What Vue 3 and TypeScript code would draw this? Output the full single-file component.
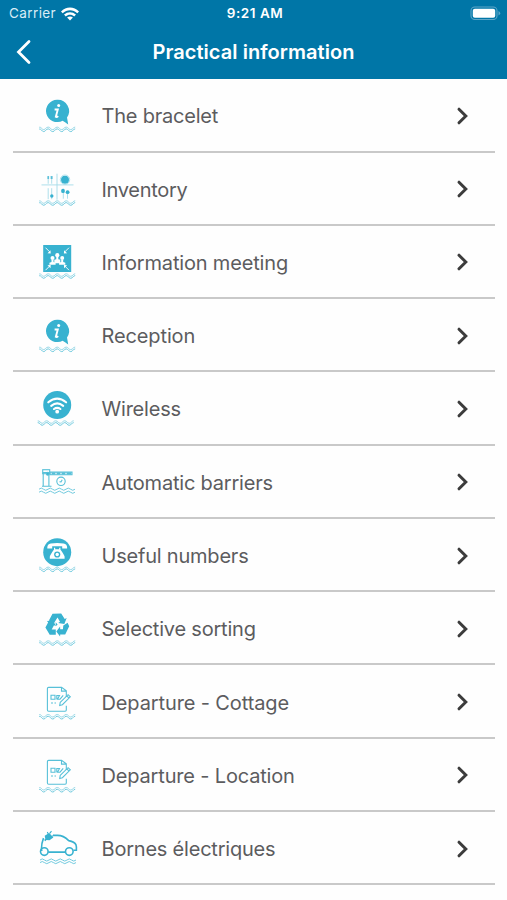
<script setup lang="ts">
type IconName =
  | 'info' | 'inventory' | 'meeting' | 'wifi' | 'barrier'
  | 'phone' | 'recycle' | 'document' | 'car'

interface Entry {
  label: string
  icon: IconName
  tracking: 'loose' | 'normal' | 'snug' | 'tight'
}

const entries: Entry[] = [
  { label: 'The bracelet', icon: 'info', tracking: 'snug' },
  { label: 'Inventory', icon: 'inventory', tracking: 'tight' },
  { label: 'Information meeting', icon: 'meeting', tracking: 'normal' },
  { label: 'Reception', icon: 'info', tracking: 'loose' },
  { label: 'Wireless', icon: 'wifi', tracking: 'snug' },
  { label: 'Automatic barriers', icon: 'barrier', tracking: 'snug' },
  { label: 'Useful numbers', icon: 'phone', tracking: 'snug' },
  { label: 'Selective sorting', icon: 'recycle', tracking: 'snug' },
  { label: 'Departure - Cottage', icon: 'document', tracking: 'loose' },
  { label: 'Departure - Location', icon: 'document', tracking: 'normal' },
  { label: 'Bornes électriques', icon: 'car', tracking: 'snug' },
]
</script>

<template>
  <div class="screen">
    <header class="header">
      <div class="status">
        <div class="carrier">
          <span>Carrier</span>
          <svg class="signal" viewBox="0 0 18 14" width="18" height="14">
            <path d="M0 4.500C5-.9 13-.9 18 4.500L16.300 6.300C12.200 2.200 5.800 2.200 1.700 6.300Z" />
            <path d="M3 7.600C6.300 4.300 11.700 4.300 15 7.600L13.200 9.400C10.800 7.200 7.200 7.200 4.800 9.400Z" />
            <path d="M6.100 10.600C7.800 9.200 10.200 9.200 11.900 10.600L9 13.500Z" />
          </svg>
        </div>
        <div class="time">9:21 AM</div>
        <svg class="battery" viewBox="0 0 31 15" width="31" height="15">
          <rect x="1" y="1" width="26" height="12.500" rx="3.800" fill="none" stroke="#5ea6c8" stroke-width="1.100" />
          <rect x="2.800" y="2.800" width="22.400" height="8.900" rx="2" fill="#fff" />
          <path d="M28.500 5v4.500q1.700-.7 1.700-2.250T28.500 5" fill="#5ea6c8" />
        </svg>
      </div>
      <div class="bar">
        <svg class="back" viewBox="0 0 18 26" width="18" height="26">
          <path d="M14 2.500 3.500 13 14 23.500" />
        </svg>
        <h1>Practical information</h1>
      </div>
    </header>
    <ul class="list">
      <li v-for="entry in entries" :key="entry.label" class="row">
        <svg class="icon" :class="entry.icon" viewBox="0 0 60 50" width="60" height="50">
          <g v-if="entry.icon === 'barrier'" class="swell">
            <path d="M9 33.200q2.250-2.200 4.500 0t4.500 0 4.500 0 4.500 0 4.500 0 4.500 0 4.500 0 4.500 0" />
            <path d="M9 36.200q2.250-2.200 4.500 0t4.500 0 4.500 0 4.500 0 4.500 0 4.500 0 4.500 0 4.500 0" />
          </g>
          <g v-else-if="entry.icon === 'car'" class="swell">
            <path d="M10 37q2.250-2.200 4.500 0t4.500 0 4.500 0 4.500 0 4.500 0 4.500 0 4.500 0 4.500 0" />
            <path d="M10 39.600q2.250-2.200 4.500 0t4.500 0 4.500 0 4.500 0 4.500 0 4.500 0 4.500 0 4.500 0" />
          </g>
          <g v-else class="waves" :class="{ left: entry.icon === 'wifi' }">
            <path d="M9.200 37.200c2.200-.4 2.600 2.400 4.500 2.400s2.200-2.500 4.500-2.500 2.200 2.500 4.500 2.500 2.200-2.500 4.500-2.500 2.200 2.500 4.500 2.500 2.200-2.500 4.500-2.500 2.200 2.500 4.500 2.500 2.200-2.500 4.500-2.500" class="second" />
            <path d="M9.200 39c2.200-.4 2.600 2.600 4.500 2.600s2.200-2.700 4.500-2.700 2.200 2.700 4.500 2.700 2.200-2.700 4.500-2.700 2.200 2.700 4.500 2.700 2.200-2.700 4.500-2.700 2.200 2.700 4.500 2.700 2.200-2.700 4.500-2.700" />
          </g>

          <g v-if="entry.icon === 'info'">
            <path class="fill" d="M27 9.700a11.200 11.200 0 1 0 5.600 21q2.100 1.100 5.600 3.700-.6-3.900-1.200-7A11.300 11.300 0 0 0 27 9.700" />
            <circle cx="28.700" cy="15.600" r="1.500" fill="#fff" />
            <path d="M24.600 19.500h3.200l-2 7.300q.9.700 2.400-.7" fill="none" stroke="#fff" stroke-width="1.900" />
          </g>

          <g v-else-if="entry.icon === 'inventory'">
            <path class="hair" d="M11.500 21.200h32M27 10v26M18.200 13v7M21.700 13v7M18.200 24.500v11M21.700 24.500v11M33.300 25v10M37.500 27v8" />
            <circle class="fill" cx="35" cy="16" r="4" />
            <circle cx="35" cy="16" r="4.700" fill="none" stroke="#9bd9e8" stroke-width=".8" />
            <path class="fill" d="M17.400 12.200h1.700v3h-1.700zm3.200 0h2v3h-2z" opacity=".75" />
            <ellipse class="fill" cx="33" cy="27.200" rx="1.900" ry="2.200" />
            <ellipse class="fill" cx="37.600" cy="28.500" rx="1.900" ry="1.900" />
            <circle class="fill" cx="21.800" cy="32.300" r="1.700" />
          </g>

          <g v-else-if="entry.icon === 'meeting'">
            <rect class="fill" x="13.200" y="8.300" width="28" height="27" />
            <g fill="#fff">
              <circle cx="27.300" cy="18.500" r="2.100" />
              <path d="M26.300 20h2v2.500l2 .6v3.400h-6v-3.400l2-.6z" />
              <circle cx="22.500" cy="21.300" r="2" />
              <path d="M21.500 23h2v2.200l2.100.8v2h-6.200v-2l2.100-.8z" />
              <circle cx="32.200" cy="21.300" r="2" />
              <path d="M31.200 23h2v2.200l2.100.8v2h-6.200v-2l2.100-.8z" />
              <path d="m20.700 16.700-.2-3.200-3 3zM33.900 16.700l.2-3.200 3 3zM20.700 28.300l-.2 3.200-3-3zM33.900 28.300l.2 3.200 3-3z" />
            </g>
            <path d="m15.500 11 4 4M39 11l-4 4M15.500 33.500l4-4M39 33.500l-4-4" stroke="#fff" stroke-width=".9" />
          </g>

          <g v-else-if="entry.icon === 'wifi'">
            <circle class="fill" cx="27.200" cy="21.300" r="14" />
            <g fill="none" stroke="#fff" stroke-width="2.100" stroke-linecap="round">
              <path d="M18.300 18.600q8.900-7.200 17.800 0M21.200 22.100q6-4.700 12 0M24 25.300q3.200-2.400 6.400 0" />
            </g>
            <circle cx="27.200" cy="28" r="1.900" fill="#fff" />
          </g>

          <g v-else-if="entry.icon === 'barrier'" class="line">
            <path d="M13.200 30V16.500h5.700V30M12 30.300h9.500" />
            <rect x="12.700" y="13.700" width="7" height="4" />
            <circle class="fill" cx="17.800" cy="17.800" r="1.400" />
            <path d="M20 16.100h22v2.700H20z" fill="#b9e5ef" />
            <path d="M22 17.500h3m2 0h3m2 0h3m2 0h4" stroke-width="2.200" />
            <circle cx="31" cy="25.300" r="4.200" />
            <path d="m29.500 25.700 1.500.2 1.200-2.100" />
          </g>

          <g v-else-if="entry.icon === 'phone'">
            <circle class="fill" cx="27.200" cy="22.200" r="14" />
            <path d="M17.300 17.500q0-3.300 3.500-3.900 6.400-1 12.800 0 3.500.6 3.500 3.900v1.100h-4.900v-2.300H22.200v2.300h-4.900z" fill="#fff" />
            <path d="M24 17.700h1.200v1.500h4v-1.500h1.200v1.700q3.500 4.800 4.200 7.100v2.200H19.800v-2.200q.7-2.300 4.200-7.100z" fill="#fff" />
            <circle class="fill" cx="27.200" cy="24.500" r="3.100" />
            <circle cx="27.200" cy="24.500" r="1.700" fill="#fff" />
          </g>

          <g v-else-if="entry.icon === 'recycle'">
            <path class="fill" d="m22.500 10 8.700-.2 3.500 5.400 2-.8-2.400 6-6.100-1.200 1.800-1.100-2.500-4.400-3.600 5.900-5-2.900z" />
            <path class="fill" d="m33.300 21.800 4.300-2.700 1.600 3.500-4 8.200h-5l-.1 1.900-3.800-4.900 3.800-4.900.1 2.600h2.700z" />
            <path class="fill" d="m17 17.200 6.200-.3 2.600 5.400-1.800-.8-2.300 4.200h4.100v5.400h-6.100l-4.300-7.300 2.700-5z" />
            <path class="fill" d="m25.700 18.500 1.900 2.200-1.900 1.800zM24.500 12.500l2.500.5-2 3.500-2.500-1.500z" />
          </g>

          <g v-else-if="entry.icon === 'document'" class="line">
            <path d="M36.300 19.500v-6L31.600 10h-13q-1.200 0-1.200 1.200v21.400q0 1.200 1.200 1.200h16.500q1.200 0 1.200-1.200v-4.300M31.500 10v3.700h4.800" />
            <path d="M21 17.900h4v3.900h-4zm5.800 3.900v-3.700h2.700l-2 3.700h2.500l3.200-3.800M21 25.600h2m1.500 0h1.500" />
            <path d="m30.200 25 7.900-7.700 2.200 2.100-7.900 7.900-2.700.8zm6.600-6.500 2.200 2.200" />
          </g>

          <g v-else-if="entry.icon === 'car'" class="body">
            <path d="M13.500 17.500q-2.100 5-2.200 12.200h1.200m5.800 1.800h17M23 14.800h4.500q6 0 11.200 5.200 6 1.200 7.200 4 .8 2.400.5 5.700h-3" />
            <circle cx="14.300" cy="31" r="3.800" />
            <circle cx="39.300" cy="31" r="3.800" />
            <path class="fill" d="m14.700 15.200 4.500-2.700 4.200 4.500-3.900 2.700-3-.3-1.200 1.200-1.200-1.200 1.200-1.200z" stroke="none" />
            <path d="m18.500 14-1.200-2.500m4.200 4.500 2.500-1.500M19.700 12.700l1.800-2.200" stroke-width="1.100" />
          </g>
        </svg>
        <span class="label" :class="entry.tracking">{{ entry.label }}</span>
        <svg class="chevron" viewBox="0 0 14 20" width="14" height="20">
          <path d="m3 3.200 6.800 6.800L3 16.800" />
        </svg>
      </li>
    </ul>
  </div>
</template>

<style>
body {
  background: #fff;
}
</style>

<style scoped>
.screen {
  height: 900px;
  overflow: hidden;
  background: #fefefe;
  font-family: Inter, "Liberation Sans", sans-serif;
}
.header {
  box-sizing: border-box;
  height: 79.300px;
  background: #0076a7;
  color: #fff;
}
.status {
  display: grid;
  grid-template-columns: 1fr auto 1fr;
  align-items: center;
  height: 27px;
  padding: 0 6px 0 9px;
  font-size: 13.500px;
  line-height: 27px;
}
.carrier {
  display: flex;
  align-items: center;
  gap: 5px;
  color: #d9edf6;
  font-size: 13.500px;
  letter-spacing: 0.400px;
}
.signal {
  fill: #fff;
}
.time {
  font-weight: 600;
  letter-spacing: 0.550px;
}
.battery {
  justify-self: end;
}
.bar {
  display: grid;
  grid-template-columns: 38px 1fr 38px;
  align-items: center;
  height: 50px;
}
.back {
  margin-left: 15px;
}
.back path {
  fill: none;
  stroke: #fff;
  stroke-width: 2.800;
  stroke-linecap: round;
}
h1 {
  margin: 0;
  text-align: center;
  font-size: 20px;
  line-height: 28px;
  font-weight: 600;
  letter-spacing: 0.050px;
}
.list {
  margin: 0;
  padding: 0 12.500px 0 13px;
  list-style: none;
}
.row {
  box-sizing: border-box;
  display: flex;
  align-items: center;
  height: 73.270px;
  padding: 0 24.500px 0 17px;
  border-bottom: 2px solid #c9c9c9;
}
.icon {
  flex: none;
}
.icon.inventory,
.icon.meeting,
.icon.wifi,
.icon.recycle {
  transform: translateY(0.700px);
}
.icon.document {
  transform: translateY(1.400px);
}
.label {
  flex: 1;
  margin-left: 11.500px;
  padding-top: 3px;
  color: #5c5c5e;
  font-size: 20px;
  line-height: 28px;
  white-space: nowrap;
}
.loose {
  letter-spacing: -0.120px;
}
.normal {
  letter-spacing: -0.170px;
}
.snug {
  letter-spacing: -0.210px;
}
.tight {
  letter-spacing: -0.300px;
}
.chevron {
  margin-top: 2px;
}
.chevron path {
  fill: none;
  stroke: #3c3c3c;
  stroke-width: 3;
  stroke-linecap: round;
}
.fill {
  fill: #38b2d0;
}
.waves path,
.swell path {
  fill: none;
  stroke: #62c4da;
  stroke-width: 0.900;
}
.waves .second {
  stroke: #8bd3e3;
}
.waves.left {
  transform: translateX(-1.500px);
}
.hair {
  fill: none;
  stroke: #a5dbe9;
  stroke-width: 0.900;
}
.line {
  fill: none;
  stroke: #57c0d8;
  stroke-width: 1.100;
}
.body {
  fill: none;
  stroke: #38b2d0;
  stroke-width: 1.600;
  transform: translateY(-2.400px);
}
.body .fill {
  fill: #38b2d0;
}
</style>
